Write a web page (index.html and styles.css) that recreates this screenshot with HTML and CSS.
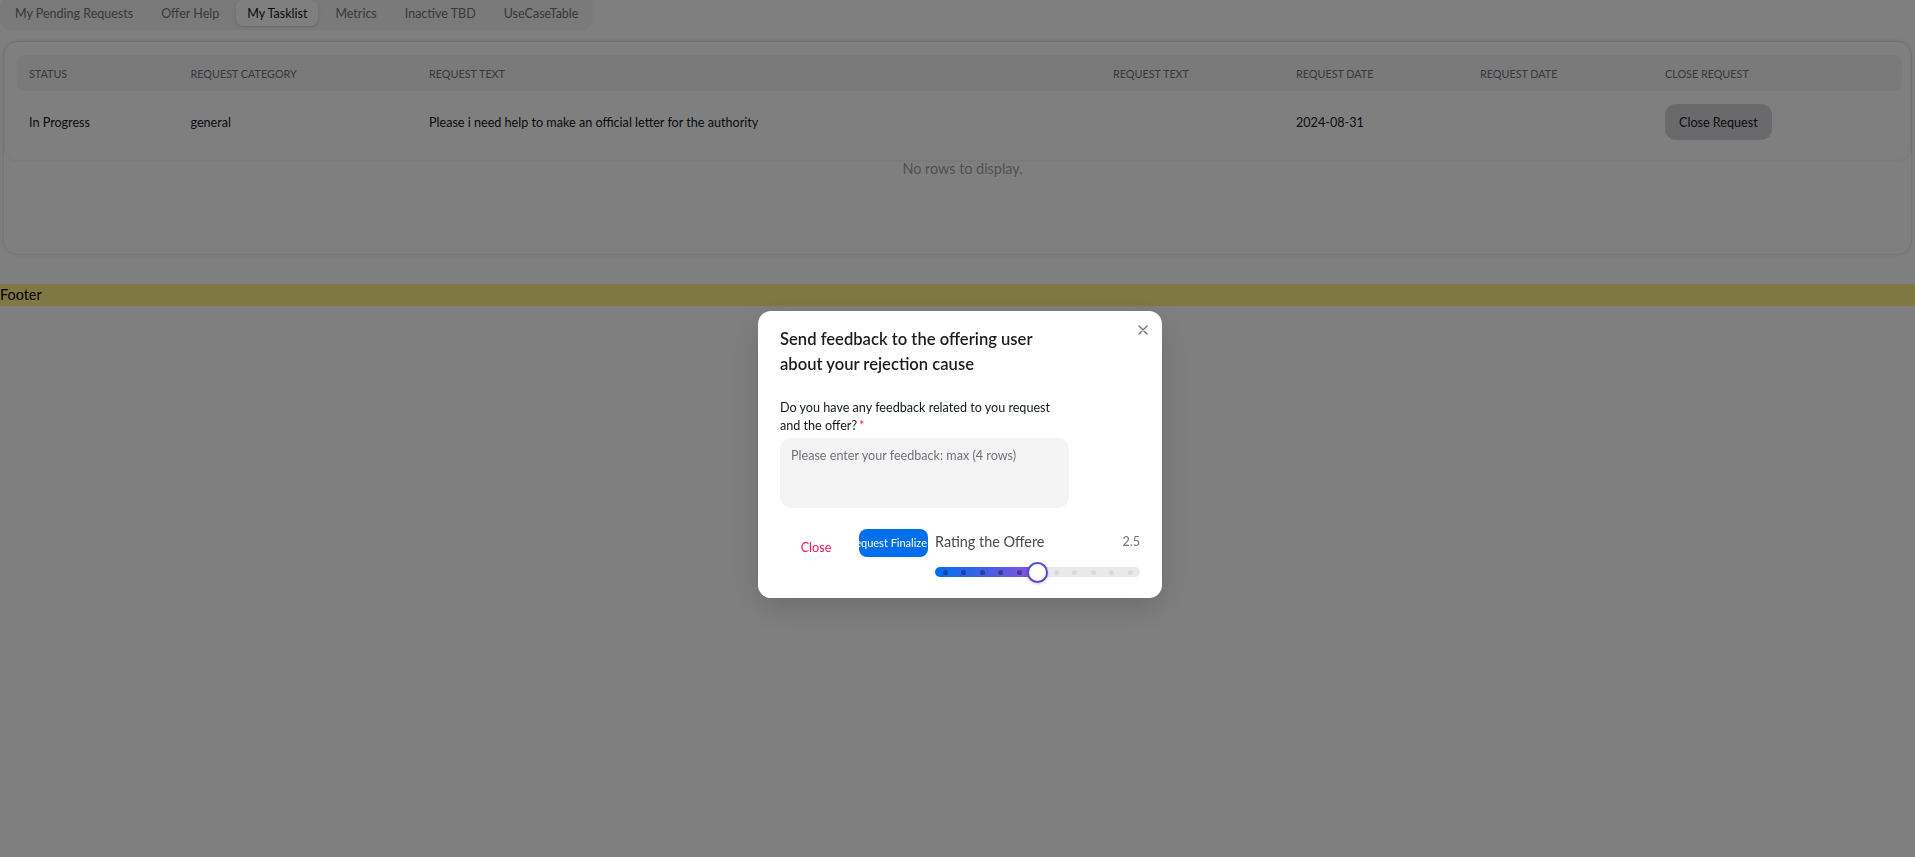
FILE: index.html
```html
<!DOCTYPE html>
<html lang="en">
<head>
<meta charset="utf-8">
<title>My Tasklist</title>
<link rel="stylesheet" href="styles.css">
</head>
<body>
<div class="page">
  <nav class="tabs">
    <span class="tab">My Pending Requests</span>
    <span class="tab">Offer Help</span>
    <span class="tab active">My Tasklist</span>
    <span class="tab">Metrics</span>
    <span class="tab">Inactive TBD</span>
    <span class="tab">UseCaseTable</span>
  </nav>

  <section class="panel">
    <div class="table-wrap">
      <div class="grid thead">
        <div class="th">STATUS</div>
        <div class="th">REQUEST CATEGORY</div>
        <div class="th">REQUEST TEXT</div>
        <div class="th">REQUEST TEXT</div>
        <div class="th">REQUEST DATE</div>
        <div class="th">REQUEST DATE</div>
        <div class="th">CLOSE REQUEST</div>
      </div>
      <div class="grid row">
        <div class="td">In Progress</div>
        <div class="td">general</div>
        <div class="td">Please i need help to make an official letter for the authority</div>
        <div class="td"></div>
        <div class="td">2024-08-31</div>
        <div class="td"></div>
        <div class="td"><button class="btn-default">Close Request</button></div>
      </div>
    </div>
    <div class="empty">No rows to display.</div>
  </section>
</div>

<footer class="footer">Footer</footer>

<div class="backdrop">
  <div class="modal">
    <button class="modal-close" aria-label="Close">
      <svg width="10" height="10" viewBox="0 0 10 10"><path d="M1 1L9 9M9 1L1 9" stroke="#71717a" stroke-width="1.3" stroke-linecap="round"/></svg>
    </button>
    <h2 class="modal-title">Send feedback to the offering user about your rejection cause</h2>
    <div class="field">
      <div class="label">Do you have any feedback related to you request and the offer?<span class="req">*</span></div>
      <textarea class="textarea" placeholder="Please enter your feedback: max (4 rows)"></textarea>
    </div>
    <div class="actions">
      <button class="btn-light">Close</button>
      <button class="btn-primary"><span class="btn-primary-text">Request Finalize</span></button>
      <div class="slider">
        <div class="slider-head">
          <span class="slider-label">Rating the Offere</span>
          <span class="slider-value">2.5</span>
        </div>
        <div class="track">
          <div class="fill" style="width:50%"></div>
          <span class="dot in"></span><span class="dot in"></span><span class="dot in"></span><span class="dot in"></span><span class="dot in"></span><span class="dot in"></span>
          <span class="dot"></span><span class="dot"></span><span class="dot"></span><span class="dot"></span><span class="dot"></span>
          <div class="thumb" style="left:50%"></div>
        </div>
      </div>
    </div>
  </div>
</div>
</body>
</html>
```
FILE: styles.css
```css
* { box-sizing: border-box; }
html, body { margin: 0; padding: 0; }
body {
  background: #ffffff;
  font-family: Lato, "Open Sans", sans-serif;
  color: #11181c;
  height: 857px;
  overflow: hidden;
}

/* Tabs */
.tabs {
  display: inline-flex;
  gap: 6px;
  padding: 4px;
  margin-top: -4px;
  background: #f4f4f5;
  border-radius: 11px;
}
.tab {
  height: 26px;
  padding: 0 11px;
  display: flex;
  align-items: center;
  font-size: 12.5px;
  color: #71717a;
  border-radius: 7px;
  white-space: nowrap;
}
.tab.active {
  background: #ffffff;
  color: #11181c;
  box-shadow: 0 0 4px rgba(0,0,0,.08), 0 1px 2px rgba(0,0,0,.1);
}

/* Panel + table */
.panel {
  margin: 11px 3px 0;
  height: 214px;
  border: 1px solid #ececee;
  border-radius: 14px;
  box-shadow: 0 0 5px rgba(0,0,0,.06);
}
.table-wrap {
  margin: 0 1px;
  padding: 13px 8px 7px 12px;
  border-radius: 13px;
  box-shadow: 0 0 4px rgba(0,0,0,.1);
}
.grid {
  display: grid;
  grid-template-columns: 161.5px 238.5px 684px 183px 184px 185px 1fr;
  align-items: center;
}
.thead {
  height: 36px;
  background: #f4f4f5;
  border-radius: 8px;
}
.th {
  padding: 0 12px;
  font-size: 10.8px;
  color: #71717a;
  white-space: nowrap;
}
.row { height: 62px; }
.td {
  padding: 0 12px;
  font-size: 12.6px;
  color: #11181c;
  white-space: nowrap;
}
.btn-default {
  height: 36px;
  padding: 0 14px;
  border: 0;
  border-radius: 11px;
  background: #d4d4d8;
  color: #11181c;
  font-family: inherit;
  font-size: 12.6px;
}
.empty {
  padding-left: 10px;
  text-align: center;
  font-size: 14.4px;
  line-height: 18px;
  color: #a1a1aa;
}

/* Footer */
.footer {
  margin-top: 29px;
  height: 22px;
  line-height: 22px;
  background: #fef08a;
  font-size: 14.4px;
  color: #000;
}

/* Modal */
.backdrop {
  position: fixed;
  inset: 0;
  background: rgba(0,0,0,.5);
  display: flex;
  justify-content: center;
  align-items: flex-start;
  padding: 311px 0 0 5px;
}
.modal {
  position: relative;
  width: 404px;
  padding: 16px 22px 21px;
  background: #ffffff;
  border-radius: 13px;
  box-shadow: 0 10px 30px rgba(0,0,0,.15);
}
.modal-close {
  position: absolute;
  top: 6px;
  right: 6px;
  width: 26px;
  height: 26px;
  padding: 0;
  border: 0;
  background: transparent;
  display: flex;
  align-items: center;
  justify-content: center;
}
.modal-title {
  width: 290px;
  margin: 0;
  font-size: 16.6px;
  line-height: 25px;
  font-weight: 600;
  color: #1c1c20;
}
.field {
  margin-top: 22px;
  width: 289px;
}
.label {
  font-size: 12.6px;
  line-height: 18px;
  color: #11181c;
}
.req { color: #f31260; margin-left: 2px; }
.textarea {
  display: block;
  width: 100%;
  height: 70px;
  margin-top: 3px;
  padding: 9px 11px;
  border: 0;
  border-radius: 11px;
  background: #f4f4f5;
  font-family: inherit;
  font-size: 12.6px;
  line-height: 18px;
  resize: none;
  outline: none;
}
.textarea::placeholder { color: #71717a; }

.actions {
  display: flex;
  align-items: flex-start;
  gap: 7px;
  margin-top: 21px;
}
.btn-light {
  flex: none;
  width: 72px;
  height: 36px;
  border: 0;
  border-radius: 11px;
  background: transparent;
  color: #f31260;
  font-family: inherit;
  font-size: 12.6px;
}
.btn-primary {
  flex: none;
  width: 69px;
  height: 28px;
  padding: 0 1px 0 0;
  border: 0;
  border-radius: 8px;
  background: #006fee;
  color: #ffffff;
  font-family: inherit;
  font-size: 11px;
  line-height: 28px;
  text-align: right;
  overflow: hidden;
  white-space: nowrap;
}
.btn-primary-text {
  display: inline-block;
  margin-left: -30px;
}
.slider { flex: 1; }
.slider-head {
  height: 24px;
  display: flex;
  align-items: center;
  justify-content: space-between;
}
.slider-label { font-size: 14.4px; color: #4a4a52; }
.slider-value { font-size: 12.6px; color: #71717a; }
.track {
  position: relative;
  height: 10px;
  margin-top: 14px;
  padding: 0 7.5px;
  border-radius: 5px;
  background: #e9e9ec;
  display: flex;
  align-items: center;
  justify-content: space-between;
}
.fill {
  position: absolute;
  left: 0;
  top: 0;
  bottom: 0;
  border-radius: 5px 0 0 5px;
  background: linear-gradient(90deg, #006fee, #8b52d8);
}
.dot {
  position: relative;
  width: 5px;
  height: 5px;
  border-radius: 50%;
  background: #d9d9de;
}
.dot.in { background: rgba(10, 10, 70, .4); }
.thumb {
  position: absolute;
  top: 50%;
  width: 21px;
  height: 21px;
  margin: -10.5px 0 0 -10.5px;
  border-radius: 50%;
  background: #ffffff;
  border: 2px solid #5349d0;
  box-shadow: 0 1px 3px rgba(0,0,0,.2);
}
```
